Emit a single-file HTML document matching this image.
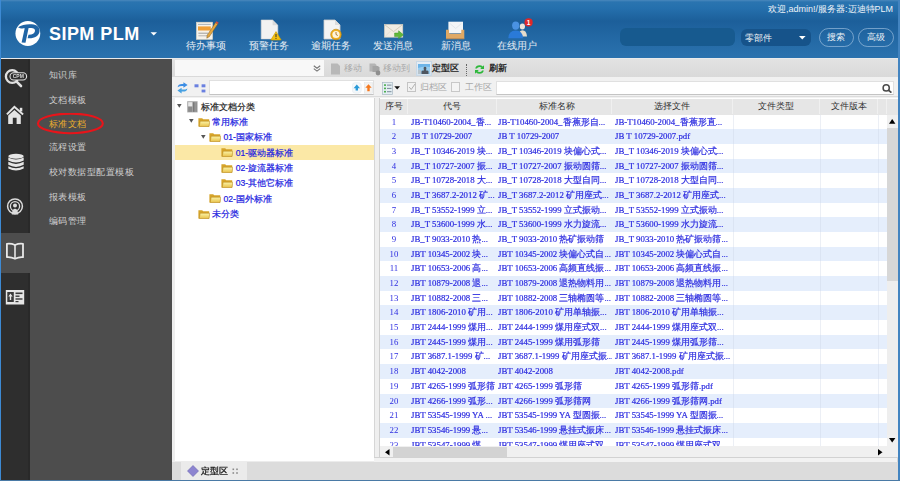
<!DOCTYPE html>
<html><head><meta charset="utf-8">
<style>
*{margin:0;padding:0;box-sizing:border-box}
html,body{width:900px;height:481px;overflow:hidden;background:#dcdcdc;font-family:"Liberation Sans",sans-serif}
.a{position:absolute}
#hdr{left:0;top:0;width:900px;height:58px;background:linear-gradient(to bottom,#4a88bd 0,#2a74b0 2px,#2570ad 8px,#1c5f9a 21px,#2267a3 36px,#2a71ad 56px)}
#hdrline{left:0;top:57.6px;width:900px;height:1.4px;background:#e9eaeb}
.tb{color:#e6edf4;font-size:9.5px;white-space:nowrap;text-align:center}
#strip{left:1.3px;top:59px;width:28.7px;height:421px;background:#2e2e2e}
#menu{left:30px;top:59px;width:142px;height:421px;background:#4d4d4d}
.mi{left:48.6px;color:#cfcfcf;font-size:9.3px;letter-spacing:0.5px;white-space:nowrap;line-height:12px}
#content{left:172px;top:59px;width:725.5px;height:421px;background:#d6d6d6}
.row{position:absolute;left:380px;width:507px;height:14.68px;font-family:"Liberation Serif",serif;font-size:8.8px;color:#2c2ce0;line-height:14.68px;white-space:nowrap}
.row.o{background:#e5eefc}
.row span{-webkit-text-stroke:0.2px currentColor}
.row span.c0{-webkit-text-stroke:0}
.row.e{background:#fff}
.row span{position:absolute;top:0;overflow:hidden}
.row i.g{position:absolute;top:0;width:1px;height:100%;background:rgba(200,210,225,0.35)}
.c0{left:0;width:28px;text-align:center}
.c1{left:31px;width:86px}
.c2{left:118px;width:114px}
.c3{left:235px;width:118px}
.hd{position:absolute;top:0;height:15.6px;line-height:15.6px;font-size:9px;color:#333;text-align:center;border-right:1px solid #f0f0f0}
.tn{position:absolute;height:15.3px;line-height:15.3px;font-size:8.6px;white-space:nowrap;color:#2020e0;-webkit-text-stroke:0.2px currentColor}
</style></head><body><div id="wrap" style="position:absolute;left:0;top:0;width:900px;height:481px;filter:blur(0.3px)">
<!-- header -->
<div id="hdr" class="a"></div>
<div id="hdrline" class="a"></div>
<!-- logo -->
<svg class="a" style="left:12px;top:18px" width="32" height="32" viewBox="0 0 32 32">
<circle cx="15.85" cy="15.5" r="12.4" fill="#fff"/>
<path d="M6 9.2 C10 6.6 16.5 5.6 21.8 6.6 C26.2 7.5 27.9 10.2 27.5 13.4 C27 17.6 23 20 17.2 20.3 L15.6 20.3 L16.5 16.7 C20.4 16.8 22.7 15.2 23 12.9 C23.3 10.8 21.6 9.9 19.2 9.9 L16.6 9.9 L13.5 24.8 L9.6 24.6 L12.7 10.3 C10.2 10.5 7.9 10.6 6 9.2Z" fill="#1f64a5"/>
</svg>
<div class="a" style="left:49px;top:23.5px;color:#fff;font-weight:bold;font-size:18px;letter-spacing:0.45px;line-height:20px;white-space:nowrap">SIPM PLM</div>
<svg class="a" style="left:150px;top:32px" width="8" height="4"><path d="M0.5 0.3 L7 0.3 L3.75 3.6Z" fill="#fff"/></svg>

<!-- header toolbar items -->
<div class="a tb" style="left:181px;top:40px;width:50px">待办事项</div>
<div class="a tb" style="left:244px;top:40px;width:50px">预警任务</div>
<div class="a tb" style="left:306px;top:40px;width:50px">逾期任务</div>
<div class="a tb" style="left:368px;top:40px;width:50px">发送消息</div>
<div class="a tb" style="left:431px;top:40px;width:50px">新消息</div>
<div class="a tb" style="left:492px;top:40px;width:50px">在线用户</div>

<!-- icon: todo -->
<svg class="a" style="left:195px;top:20px" width="24" height="20" viewBox="0 0 24 20">
<rect x="1.4" y="2.2" width="16.2" height="17.2" fill="#f6f2ea" stroke="#ddd4c2" stroke-width="0.6"/>
<line x1="3" y1="4.4" x2="15.8" y2="4.4" stroke="#8a98a6" stroke-width="0.7"/>
<rect x="3" y="6.4" width="12.8" height="4.1" fill="#f0a038"/>
<line x1="3.4" y1="13.2" x2="13" y2="13.2" stroke="#7a7a7a" stroke-width="0.7"/>
<line x1="3.4" y1="15.8" x2="12" y2="15.8" stroke="#9a9a9a" stroke-width="0.7"/>
<path d="M11.8 18.2 L12.2 15.2 L20.6 2.6 L22.8 4 L14.4 16.6Z" fill="#e6a840" stroke="#7a5a20" stroke-width="0.5"/>
<path d="M20.6 2.6 L21.5 1.3 L23.7 2.7 L22.8 4Z" fill="#e04a3a"/>
</svg>
<!-- icon: warning task -->
<svg class="a" style="left:259px;top:19px" width="24" height="22" viewBox="0 0 24 22">
<path d="M2.2 1 L13.6 1 L18.8 6.2 L18.8 19.9 L2.2 19.9Z" fill="#f2f2f2" stroke="#d8d8d8" stroke-width="0.6"/>
<path d="M13.6 1 L13.6 6.2 L18.8 6.2Z" fill="#dadada"/>
<path d="M17 12.6 L22.2 21 L11.8 21Z" fill="#f4c010" stroke="#c89a00" stroke-width="0.6"/>
<rect x="16.5" y="15" width="1" height="3.2" fill="#333"/><rect x="16.5" y="19" width="1" height="0.9" fill="#333"/>
</svg>
<!-- icon: overdue -->
<svg class="a" style="left:321px;top:19px" width="24" height="22" viewBox="0 0 24 22">
<path d="M3 1 L14 1 L19 6 L19 20 L3 20Z" fill="#f4f4f4" stroke="#cfcfcf" stroke-width="0.8"/>
<path d="M14 1 L14 6 L19 6" fill="#ddd"/>
<circle cx="15" cy="15.5" r="5.3" fill="#f0b020" stroke="#c08000" stroke-width="0.6"/>
<circle cx="15" cy="15.5" r="3.6" fill="#fff4dc"/>
<path d="M15 13 L15 15.5 L16.8 16.5" stroke="#a06000" stroke-width="0.8" fill="none"/>
</svg>
<!-- icon: send msg -->
<svg class="a" style="left:383px;top:21px" width="24" height="20" viewBox="0 0 24 20">
<rect x="1.4" y="3.4" width="18.4" height="12.8" fill="#f1ece2" stroke="#d6cfc0" stroke-width="0.6"/>
<path d="M1.6 3.6 L10.6 10.6 L19.6 3.6" fill="none" stroke="#c9c0ae" stroke-width="0.7"/>
<path d="M1.6 16 L8 9.6 M19.6 16 L13.2 9.6" fill="none" stroke="#ddd6c8" stroke-width="0.5"/>
<path d="M11.6 12 L15.6 12 L15.6 9.8 L20.4 13.8 L15.6 17.8 L15.6 15.6 L11.6 15.6Z" fill="#62b83a" stroke="#3f9a28" stroke-width="0.5"/>
</svg>
<!-- icon: new msg -->
<svg class="a" style="left:445px;top:20px" width="22" height="20" viewBox="0 0 22 20">
<rect x="3.4" y="1.7" width="14.6" height="11.6" fill="#f3f5f7"/>
<path d="M5 3.5 L10.7 8.5 L16.4 3.5" fill="none" stroke="#dde2e8" stroke-width="0.8"/>
<path d="M1 9.7 L4 9.7 L4 12.6 Q4 13.8 5.4 13.8 L14.9 13.8 Q16.3 13.8 16.3 12.6 L16.3 9.7 L19.3 9.7 L19.3 18.8 L1 18.8Z" fill="#dfa864"/>
<path d="M1 18.8 L19.3 18.8" stroke="#c88a48" stroke-width="0.8"/>
</svg>
<!-- icon: online users -->
<svg class="a" style="left:506px;top:18px" width="28" height="22" viewBox="0 0 28 22">
<ellipse cx="16.4" cy="8.6" rx="2.6" ry="3" fill="#ece6dc"/>
<path d="M12.5 18.5 Q13 12.2 16.4 12.2 Q20.5 12.2 21 18.5Z" fill="#e6dccc"/>
<ellipse cx="9.7" cy="7.6" rx="3.6" ry="4.2" fill="#4a92e2"/>
<path d="M2.3 20.2 Q2.6 12.6 9.7 12.6 Q16.6 12.6 17 20.2Z" fill="#2a7ad8"/>
<circle cx="22.6" cy="4.4" r="4.1" fill="#e02828"/>
<text x="22.6" y="6.8" font-size="6.5" font-weight="bold" fill="#fff" text-anchor="middle" font-family="Liberation Sans">1</text>
</svg>

<!-- welcome -->
<div class="a" style="left:768px;top:3.5px;color:#eef3f8;font-size:9px;white-space:nowrap;line-height:11px">欢迎,admin!/服务器:迈迪特PLM</div>
<!-- search -->
<div class="a" style="left:620.3px;top:27.8px;width:114.7px;height:18.4px;border-radius:6px;background:#175a8f"></div>
<div class="a" style="left:740.5px;top:29px;width:70.5px;height:17px;border-radius:6px;background:#16538a"></div>
<div class="a" style="left:745px;top:31.8px;color:#eef2f6;font-size:9px;line-height:12px;letter-spacing:0.2px">零部件</div>
<svg class="a" style="left:799px;top:36px" width="7" height="4"><path d="M0 0 L6.6 0 L3.3 3.5Z" fill="#fff"/></svg>
<div class="a" style="left:818.5px;top:27.5px;width:35.8px;height:19.3px;border-radius:10px;border:1.3px solid rgba(200,222,244,0.5);color:#eef2f6;font-size:9px;text-align:center;line-height:17px">搜索</div>
<div class="a" style="left:857.6px;top:27.5px;width:36px;height:19.3px;border-radius:10px;border:1.3px solid rgba(200,222,244,0.5);color:#eef2f6;font-size:9px;text-align:center;line-height:17px">高级</div>

<!-- sidebar -->
<div id="strip" class="a"></div>
<div class="a" style="left:1.3px;top:232.5px;width:28.7px;height:40.2px;background:#4d4d4d"></div>
<div id="menu" class="a"></div>
<div class="a" style="left:27.6px;top:59px;width:2.4px;height:421px;background:#292929"></div>
<div class="a" style="left:27.6px;top:232.5px;width:2.4px;height:40.2px;background:#4d4d4d"></div>

<!-- sidebar icons -->
<svg class="a" style="left:4px;top:66px" width="24" height="22" viewBox="0 0 24 22">
<circle cx="8.2" cy="10.5" r="6.3" fill="none" stroke="#e0e0e0" stroke-width="2.3"/>
<path d="M12.6 15.6 L17 20" stroke="#e0e0e0" stroke-width="2.6" stroke-linecap="round"/>
<rect x="6" y="6.8" width="16.6" height="7.2" rx="3.6" fill="#2e2e2e" stroke="#e0e0e0" stroke-width="1.1"/>
<text x="14.3" y="12.2" font-size="5" font-weight="bold" fill="#d8d8d8" text-anchor="middle" font-family="Liberation Sans">CPM</text>
</svg>
<svg class="a" style="left:5px;top:105px" width="20" height="20" viewBox="0 0 20 20">
<path d="M1.9 9.4 L9.4 1.8 L18.1 9.4" fill="none" stroke="#e4e4e4" stroke-width="2"/>
<path d="M3.2 10.6 L9.4 5.1 L15.8 10.6 L15.8 18.9 L11.6 18.9 L11.6 12.7 L7.8 12.7 L7.8 18.9 L3.2 18.9Z" fill="#e4e4e4"/>
<rect x="14.8" y="2.8" width="2.5" height="3.6" fill="#e4e4e4"/>
</svg>
<svg class="a" style="left:6.5px;top:152.8px" width="18" height="19" viewBox="0 0 19 21">
<ellipse cx="9.5" cy="3.5" rx="8.5" ry="2.8" fill="#e6e6e6"/>
<path d="M1 5 Q9.5 9.6 18 5 L18 8.3 Q9.5 12.9 1 8.3Z" fill="#e6e6e6"/>
<path d="M1 9.8 Q9.5 14.4 18 9.8 L18 13.1 Q9.5 17.7 1 13.1Z" fill="#e6e6e6"/>
<path d="M1 14.6 Q9.5 19.2 18 14.6 L18 17 Q9.5 21.6 1 17Z" fill="#e6e6e6"/>
</svg>
<svg class="a" style="left:6px;top:197.8px" width="18" height="17" viewBox="0 0 18 17">
<circle cx="9" cy="8.3" r="7.4" fill="none" stroke="#dcdcdc" stroke-width="1.5"/>
<circle cx="9" cy="8.3" r="4.6" fill="none" stroke="#dcdcdc" stroke-width="1.3"/>
<circle cx="9" cy="7.6" r="2" fill="#dcdcdc"/>
<path d="M5.8 16.6 Q6.2 10.8 9 10.8 Q11.8 10.8 12.2 16.6Z" fill="#dcdcdc"/>
</svg>
<svg class="a" style="left:5px;top:242px" width="20" height="19" viewBox="0 0 20 19">
<path d="M1.9 1.8 Q6 1.2 10 3 Q14 1.2 18 1.8 L18 15.2 Q14 14.8 10 16.8 Q6 14.8 1.9 15.2Z" fill="none" stroke="#e8e8e8" stroke-width="1.8" stroke-linejoin="round"/>
<line x1="10" y1="3" x2="10" y2="16.2" stroke="#e8e8e8" stroke-width="1.6"/>
</svg>
<svg class="a" style="left:5px;top:288.7px" width="20" height="17" viewBox="0 0 20 17">
<rect x="0.8" y="1" width="18.4" height="14.5" fill="#e6e6e6"/>
<rect x="2.3" y="3" width="6.5" height="10" fill="#3a3a3a"/>
<path d="M5.5 4.5 L3.3 7.5 L4.8 7.5 L4.8 11 L6.2 11 L6.2 7.5 L7.7 7.5Z" fill="#e6e6e6"/>
<rect x="10.5" y="3.5" width="7" height="1.6" fill="#3a3a3a"/>
<rect x="10.5" y="6.5" width="4" height="1.4" fill="#3a3a3a"/>
<rect x="10.5" y="9.3" width="7" height="1.4" fill="#3a3a3a"/>
<rect x="10.5" y="12" width="3" height="1.2" fill="#3a3a3a"/>
</svg>

<!-- menu items -->
<div class="a mi" style="top:69px">知识库</div>
<div class="a mi" style="top:94px">文档模板</div>
<div class="a mi" style="top:118px;color:#ebb02c">标准文档</div>
<div class="a mi" style="top:141px">流程设置</div>
<div class="a mi" style="top:166px">校对数据型配置模板</div>
<div class="a mi" style="top:191px">报表模板</div>
<div class="a mi" style="top:215px">编码管理</div>
<svg class="a" style="left:36px;top:113px" width="70" height="23" viewBox="0 0 70 23">
<ellipse cx="34.4" cy="10.4" rx="32.4" ry="9.8" fill="none" stroke="#e8141a" stroke-width="2.1"/>
</svg>

<!-- content -->
<div id="content" class="a"></div>
<!-- toolbar row 1 -->
<div class="a" style="left:172px;top:59px;width:725.5px;height:17.5px;background:linear-gradient(#e2e2e2,#d9d9d9)"></div>
<div class="a" style="left:175px;top:59.5px;width:149px;height:16px;background:#f8f8f8"></div>
<svg class="a" style="left:313px;top:64.5px" width="8" height="7" viewBox="0 0 8 7"><path d="M0.8 0.8 L4 3.3 L7.2 0.8 M0.8 3.6 L4 6.1 L7.2 3.6" stroke="#777" stroke-width="1.2" fill="none"/></svg>

<!-- toolbar row 2 -->
<div class="a" style="left:172px;top:76.5px;width:725.5px;height:21px;background:#f1f1f1"></div>
<div class="a" style="left:172px;top:96.3px;width:725.5px;height:1.2px;background:#dcdcdc"></div>
<!-- tree panel toolbar row 2 -->
<svg class="a" style="left:177px;top:82px" width="11" height="12" viewBox="0 0 11 12">
<path d="M0.6 5.2 Q1.2 2 5 2 L6.4 2 L6.4 0.2 L10.6 3 L6.4 5.8 L6.4 4 L5 4 Q2.4 4 0.6 5.2Z" fill="#3b8de4"/>
<path d="M10.4 6.4 Q9.8 9.6 6 9.6 L4.6 9.6 L4.6 11.4 L0.4 8.6 L4.6 5.8 L4.6 7.6 L6 7.6 Q8.6 7.6 10.4 6.4Z" fill="#46a0e2"/>
</svg>
<svg class="a" style="left:193.5px;top:83.5px" width="12" height="9" viewBox="0 0 12 9">
<rect x="0.5" y="0.3" width="4" height="3" fill="#6a80e0"/><rect x="7.6" y="0.3" width="3.8" height="3" fill="#6a80e0"/>
<rect x="7.6" y="5.6" width="3.8" height="2.8" fill="#6a80e0"/>
</svg>
<div class="a" style="left:209.2px;top:80px;width:165px;height:14.8px;background:#fff;border:1px solid #e0e0e0;border-bottom-color:#c4c4c4"></div>
<svg class="a" style="left:351.5px;top:82px" width="22" height="12" viewBox="0 0 22 12">
<rect x="0.3" y="0.6" width="9" height="10.6" rx="3" fill="#f3f7fa" stroke="#e2e8ee" stroke-width="0.5"/>
<path d="M4.8 2.4 L8 6.2 L6 6.2 L6 8.6 L3.6 8.6 L3.6 6.2 L1.6 6.2Z" fill="#2a9ad8"/>
<rect x="12.3" y="0.6" width="8.4" height="10.6" fill="#f4f2f0" stroke="#dde3ea" stroke-width="0.5"/>
<path d="M16.5 2.2 L19.7 5.8 L17.7 5.8 L17.7 9.2 L15.3 9.2 L15.3 5.8 L13.3 5.8Z" fill="#f5781e"/>
</svg>

<!-- grid toolbar row 1 -->
<svg class="a" style="left:330px;top:63px" width="11" height="12" viewBox="0 0 11 12"><path d="M1 0.5 L7.5 0.5 L10 3 L10 11.5 L1 11.5Z" fill="#b8b8b8"/></svg>
<div class="a" style="left:344px;top:63px;font-size:8.8px;color:#a8a8a8;line-height:11px">移动</div>
<svg class="a" style="left:368.5px;top:62.5px" width="13" height="13" viewBox="0 0 13 13"><path d="M0.5 0.5 L6 0.5 L7.5 2 L7.5 8.5 L0.5 8.5Z" fill="#b4b4b4"/><path d="M3.5 3 L9 3 L10.5 4.5 L10.5 9 L3.5 9Z" fill="#a4a4a4"/><circle cx="9" cy="10" r="2.4" fill="#8e8e8e"/></svg>
<div class="a" style="left:383px;top:63px;font-size:8.8px;color:#a8a8a8;line-height:11px">移动到</div>
<div class="a" style="left:415.5px;top:60.5px;width:16px;height:15.5px;background:linear-gradient(#e6eef6,#d4e2ee);border:1px solid #c8d8e6"></div>
<svg class="a" style="left:418px;top:63.5px" width="12" height="10" viewBox="0 0 12 10"><rect x="0" y="0" width="12" height="10" fill="#98cdf0"/><path d="M0 0 L12 0 L12 3 Q6 1.5 0 4Z" fill="#6cb4e8"/><path d="M3.5 10 L3.5 7.6 Q3.5 6.4 5 6.4 L6 6.4 L5.6 4.2 Q5.6 2.8 7 2.8 Q8.4 2.8 8.4 4.2 L8 6.4 L9 6.4 Q10.5 6.4 10.5 7.6 L10.5 10Z" fill="#4e5660"/><rect x="0" y="6" width="3" height="4" fill="#b8c4cc"/></svg>
<div class="a" style="left:432px;top:62.5px;font-size:9px;color:#1a1a1a;line-height:11px;-webkit-text-stroke:0.3px #1a1a1a">定型区</div>
<div class="a" style="left:465.5px;top:64px;width:1px;height:12px;border-left:1px dotted #666"></div>
<svg class="a" style="left:473.5px;top:63.5px" width="11" height="11" viewBox="0 0 11 11">
<path d="M1.2 4.6 Q2 1.3 5.5 1.3 Q7.6 1.3 8.7 2.6 L10 1.2 L10 5 L6.2 5 L7.5 3.7 Q6.8 3 5.5 3 Q3.5 3 2.9 4.6Z" fill="#2db83a"/>
<path d="M9.8 6.4 Q9 9.7 5.5 9.7 Q3.4 9.7 2.3 8.4 L1 9.8 L1 6 L4.8 6 L3.5 7.3 Q4.2 8 5.5 8 Q7.5 8 8.1 6.4Z" fill="#2db83a"/>
</svg>
<div class="a" style="left:488.5px;top:62.5px;font-size:9px;color:#1a1a1a;line-height:11px;-webkit-text-stroke:0.3px #1a1a1a">刷新</div>

<!-- grid toolbar row 2 -->
<svg class="a" style="left:381.5px;top:81.5px" width="18" height="13" viewBox="0 0 18 13">
<rect x="0.5" y="0.5" width="10" height="12" fill="#e4eef2" stroke="#a8b8c4" stroke-width="0.7"/>
<rect x="2" y="2.3" width="2" height="1.6" fill="#4caf50"/><rect x="2" y="5.6" width="2" height="1.6" fill="#4caf50"/><rect x="2" y="8.9" width="2" height="1.6" fill="#4caf50"/>
<rect x="5" y="2.6" width="4.5" height="1" fill="#7a8a9a"/><rect x="5" y="5.9" width="4.5" height="1" fill="#7a8a9a"/><rect x="5" y="9.2" width="4.5" height="1" fill="#7a8a9a"/>
<path d="M12.3 4.2 L18.1 4.2 L15.2 7.5Z" fill="#111"/>
</svg>
<div class="a" style="left:406.7px;top:82.3px;width:9.5px;height:10px;border:1px solid #c4c4c4;background:#f2f2f2"></div>
<svg class="a" style="left:407.5px;top:83px" width="8" height="8"><path d="M1.2 4 L3.2 6.5 L7 1" stroke="#b0b0b0" stroke-width="1" fill="none"/></svg>
<div class="a" style="left:420px;top:82px;font-size:8.8px;color:#a8a8a8;line-height:11px">归档区</div>
<div class="a" style="left:450.7px;top:82.3px;width:9.5px;height:10px;border:1px solid #c8c8c8;background:#f4f4f4"></div>
<div class="a" style="left:464.7px;top:82px;font-size:8.8px;color:#a8a8a8;line-height:11px">工作区</div>
<div class="a" style="left:496px;top:80.5px;width:397.5px;height:14.5px;background:#fff;border:1px solid #e0e0e0;border-bottom-color:#c4c4c4"></div>
<svg class="a" style="left:881.5px;top:83.5px" width="11" height="9" viewBox="0 0 11 9"><circle cx="4.2" cy="3.9" r="3.1" fill="none" stroke="#4a4a4a" stroke-width="1.5"/><path d="M6.4 6.1 L9.4 8.6" stroke="#4a4a4a" stroke-width="1.8"/></svg>

<!-- tree body -->
<div class="a" style="left:172px;top:97.5px;width:3px;height:364px;background:#eeeeee"></div>
<div class="a" style="left:174.5px;top:97.5px;width:200px;height:363.1px;background:#fff"></div>
<div class="a" style="left:175px;top:145px;width:199.4px;height:15.4px;background:#fbe8a6"></div>
<!-- tree nodes -->
<svg width="0" height="0" style="position:absolute"><defs><linearGradient id="fg" x1="0" y1="0" x2="0" y2="1"><stop offset="0" stop-color="#fbf4a8"/><stop offset="1" stop-color="#e8c048"/></linearGradient></defs></svg>
<svg class="a" style="left:177.3px;top:103.8px" width="5" height="4"><path d="M0 0 L4.6 0 L2.3 3.8Z" fill="#555"/></svg>
<svg class="a" style="left:186.5px;top:101.2px" width="11" height="12" viewBox="0 0 11 12">
<rect x="0.2" y="0.2" width="10.4" height="11.2" fill="#a8a8a8"/>
<rect x="1.2" y="1.2" width="4" height="4" fill="#e8e8e8"/>
<rect x="6" y="1.2" width="1.6" height="9.6" fill="#777"/>
<rect x="8.4" y="1.2" width="1.4" height="9.6" fill="#8a8a8a"/>
<rect x="1.2" y="6" width="4" height="4.8" fill="#8c8c8c"/>
</svg>
<div class="tn" style="left:201px;top:99.8px;color:#222">标准文档分类</div>

<svg class="a" style="left:189px;top:119.3px" width="5" height="4"><path d="M0 0 L4.6 0 L2.3 3.8Z" fill="#555"/></svg>
<svg class="a f" style="left:197.5px;top:116.8px" width="12" height="10" viewBox="0 0 12 10"><path d="M0.4 1.2 L4.2 1.2 L5.2 2.3 L11.2 2.3 L11.2 9.6 L0.4 9.6Z" fill="#d6a42a"/><path d="M2.2 4.2 L11.8 4.2 L11 9.6 L1.2 9.6Z" fill="url(#fg)" stroke="#b4861e" stroke-width="0.5"/></svg>
<div class="tn" style="left:212px;top:115.1px">常用标准</div>

<svg class="a" style="left:200.7px;top:134.6px" width="5" height="4"><path d="M0 0 L4.6 0 L2.3 3.8Z" fill="#555"/></svg>
<svg class="a" style="left:209.2px;top:132.1px" width="12" height="10" viewBox="0 0 12 10"><path d="M0.4 1.2 L4.2 1.2 L5.2 2.3 L11.2 2.3 L11.2 9.6 L0.4 9.6Z" fill="#d6a42a"/><path d="M2.2 4.2 L11.8 4.2 L11 9.6 L1.2 9.6Z" fill="url(#fg)" stroke="#b4861e" stroke-width="0.5"/></svg>
<div class="tn" style="left:223.5px;top:130.4px">01-国家标准</div>

<svg class="a" style="left:220.9px;top:147.4px" width="12" height="10" viewBox="0 0 12 10"><path d="M0.4 1.2 L4.2 1.2 L5.2 2.3 L11.2 2.3 L11.2 9.6 L0.4 9.6Z" fill="#d6a42a"/><path d="M2.2 4.2 L11.8 4.2 L11 9.6 L1.2 9.6Z" fill="url(#fg)" stroke="#b4861e" stroke-width="0.5"/></svg>
<div class="tn" style="left:235.8px;top:145.7px">01-驱动器标准</div>

<svg class="a" style="left:220.9px;top:162.7px" width="12" height="10" viewBox="0 0 12 10"><path d="M0.4 1.2 L4.2 1.2 L5.2 2.3 L11.2 2.3 L11.2 9.6 L0.4 9.6Z" fill="#d6a42a"/><path d="M2.2 4.2 L11.8 4.2 L11 9.6 L1.2 9.6Z" fill="url(#fg)" stroke="#b4861e" stroke-width="0.5"/></svg>
<div class="tn" style="left:235.8px;top:161px">02-旋流器标准</div>

<svg class="a" style="left:220.9px;top:178px" width="12" height="10" viewBox="0 0 12 10"><path d="M0.4 1.2 L4.2 1.2 L5.2 2.3 L11.2 2.3 L11.2 9.6 L0.4 9.6Z" fill="#d6a42a"/><path d="M2.2 4.2 L11.8 4.2 L11 9.6 L1.2 9.6Z" fill="url(#fg)" stroke="#b4861e" stroke-width="0.5"/></svg>
<div class="tn" style="left:235.8px;top:176.3px">03-其他它标准</div>

<svg class="a" style="left:209.2px;top:193.3px" width="12" height="10" viewBox="0 0 12 10"><path d="M0.4 1.2 L4.2 1.2 L5.2 2.3 L11.2 2.3 L11.2 9.6 L0.4 9.6Z" fill="#d6a42a"/><path d="M2.2 4.2 L11.8 4.2 L11 9.6 L1.2 9.6Z" fill="url(#fg)" stroke="#b4861e" stroke-width="0.5"/></svg>
<div class="tn" style="left:223.5px;top:191.6px">02-国外标准</div>

<svg class="a" style="left:197.5px;top:208.6px" width="12" height="10" viewBox="0 0 12 10"><path d="M0.4 1.2 L4.2 1.2 L5.2 2.3 L11.2 2.3 L11.2 9.6 L0.4 9.6Z" fill="#d6a42a"/><path d="M2.2 4.2 L11.8 4.2 L11 9.6 L1.2 9.6Z" fill="url(#fg)" stroke="#b4861e" stroke-width="0.5"/></svg>
<div class="tn" style="left:212px;top:206.9px">未分类</div>

<!-- splitter -->
<div class="a" style="left:374.4px;top:97.5px;width:5.6px;height:363.1px;background:#efefef;border-left:1px solid #d6d6d6;border-right:1px solid #d0d0d0"></div>

<!-- grid -->
<div class="a" style="left:380px;top:98.3px;width:517.5px;height:348px;background:#fff"></div>
<div class="a" style="left:380px;top:98.8px;width:507px;height:15.8px;background:#e6e6e6"></div>
<div class="hd" style="left:380px;width:28.0px;top:98.8px">序号</div>
<div class="hd" style="left:408px;width:89.0px;top:98.8px">代号</div>
<div class="hd" style="left:497px;width:115.4px;top:98.8px;padding-left:5px">标准名称</div>
<div class="hd" style="left:612.4px;width:120.6px;top:98.8px">选择文件</div>
<div class="hd" style="left:733px;width:87.0px;top:98.8px">文件类型</div>
<div class="hd" style="left:820px;width:58.0px;top:98.8px">文件版本</div>
<div class="hd" style="left:878px;width:9.0px;top:98.8px"></div>

<!-- rows clip -->
<div class="a" style="left:0;top:0;width:900px;height:481px;overflow:hidden;pointer-events:none">
<div class="a" style="left:0;top:0;width:900px;height:446px;overflow:hidden">
<div class="row e" style="top:114.60px"><span class="c0">1</span><span class="c1">JB-T10460-2004_香...</span><span class="c2">JB-T10460-2004_香蕉形自...</span><span class="c3">JB-T10460-2004_香蕉形直...</span><i class="g" style="left:353px"></i><i class="g" style="left:440px"></i><i class="g" style="left:498px"></i></div>
<div class="row o" style="top:129.28px"><span class="c0">2</span><span class="c1">JB T 10729-2007</span><span class="c2">JB T 10729-2007</span><span class="c3">JB T 10729-2007.pdf</span><i class="g" style="left:353px"></i><i class="g" style="left:440px"></i><i class="g" style="left:498px"></i></div>
<div class="row e" style="top:143.96px"><span class="c0">3</span><span class="c1">JB_T 10346-2019 块...</span><span class="c2">JB_T 10346-2019 块偏心式...</span><span class="c3">JB_T 10346-2019 块偏心式...</span><i class="g" style="left:353px"></i><i class="g" style="left:440px"></i><i class="g" style="left:498px"></i></div>
<div class="row o" style="top:158.64px"><span class="c0">4</span><span class="c1">JB_T 10727-2007 振...</span><span class="c2">JB_T 10727-2007 振动圆筛...</span><span class="c3">JB_T 10727-2007 振动圆筛...</span><i class="g" style="left:353px"></i><i class="g" style="left:440px"></i><i class="g" style="left:498px"></i></div>
<div class="row e" style="top:173.32px"><span class="c0">5</span><span class="c1">JB_T 10728-2018 大...</span><span class="c2">JB_T 10728-2018 大型自同...</span><span class="c3">JB_T 10728-2018 大型自同...</span><i class="g" style="left:353px"></i><i class="g" style="left:440px"></i><i class="g" style="left:498px"></i></div>
<div class="row o" style="top:188.00px"><span class="c0">6</span><span class="c1">JB_T 3687.2-2012 矿...</span><span class="c2">JB_T 3687.2-2012 矿用座式...</span><span class="c3">JB_T 3687.2-2012 矿用座式...</span><i class="g" style="left:353px"></i><i class="g" style="left:440px"></i><i class="g" style="left:498px"></i></div>
<div class="row e" style="top:202.68px"><span class="c0">7</span><span class="c1">JB_T 53552-1999 立...</span><span class="c2">JB_T 53552-1999 立式振动...</span><span class="c3">JB_T 53552-1999 立式振动...</span><i class="g" style="left:353px"></i><i class="g" style="left:440px"></i><i class="g" style="left:498px"></i></div>
<div class="row o" style="top:217.36px"><span class="c0">8</span><span class="c1">JB_T 53600-1999 水...</span><span class="c2">JB_T 53600-1999 水力旋流...</span><span class="c3">JB_T 53600-1999 水力旋流...</span><i class="g" style="left:353px"></i><i class="g" style="left:440px"></i><i class="g" style="left:498px"></i></div>
<div class="row e" style="top:232.04px"><span class="c0">9</span><span class="c1">JB_T 9033-2010 热...</span><span class="c2">JB_T 9033-2010 热矿振动筛</span><span class="c3">JB_T 9033-2010 热矿振动筛...</span><i class="g" style="left:353px"></i><i class="g" style="left:440px"></i><i class="g" style="left:498px"></i></div>
<div class="row o" style="top:246.72px"><span class="c0">10</span><span class="c1">JBT 10345-2002 块...</span><span class="c2">JBT 10345-2002 块偏心式自...</span><span class="c3">JBT 10345-2002 块偏心式自...</span><i class="g" style="left:353px"></i><i class="g" style="left:440px"></i><i class="g" style="left:498px"></i></div>
<div class="row e" style="top:261.40px"><span class="c0">11</span><span class="c1">JBT 10653-2006 高...</span><span class="c2">JBT 10653-2006 高频直线振...</span><span class="c3">JBT 10653-2006 高频直线振...</span><i class="g" style="left:353px"></i><i class="g" style="left:440px"></i><i class="g" style="left:498px"></i></div>
<div class="row o" style="top:276.08px"><span class="c0">12</span><span class="c1">JBT 10879-2008 退...</span><span class="c2">JBT 10879-2008 退热物料用...</span><span class="c3">JBT 10879-2008 退热物料用...</span><i class="g" style="left:353px"></i><i class="g" style="left:440px"></i><i class="g" style="left:498px"></i></div>
<div class="row e" style="top:290.76px"><span class="c0">13</span><span class="c1">JBT 10882-2008 三...</span><span class="c2">JBT 10882-2008 三轴椭圆等...</span><span class="c3">JBT 10882-2008 三轴椭圆等...</span><i class="g" style="left:353px"></i><i class="g" style="left:440px"></i><i class="g" style="left:498px"></i></div>
<div class="row o" style="top:305.44px"><span class="c0">14</span><span class="c1">JBT 1806-2010 矿用...</span><span class="c2">JBT 1806-2010 矿用单轴振...</span><span class="c3">JBT 1806-2010 矿用单轴振...</span><i class="g" style="left:353px"></i><i class="g" style="left:440px"></i><i class="g" style="left:498px"></i></div>
<div class="row e" style="top:320.12px"><span class="c0">15</span><span class="c1">JBT 2444-1999 煤用...</span><span class="c2">JBT 2444-1999 煤用座式双...</span><span class="c3">JBT 2444-1999 煤用座式双...</span><i class="g" style="left:353px"></i><i class="g" style="left:440px"></i><i class="g" style="left:498px"></i></div>
<div class="row o" style="top:334.80px"><span class="c0">16</span><span class="c1">JBT 2445-1999 煤用...</span><span class="c2">JBT 2445-1999 煤用弧形筛</span><span class="c3">JBT 2445-1999 煤用弧形筛...</span><i class="g" style="left:353px"></i><i class="g" style="left:440px"></i><i class="g" style="left:498px"></i></div>
<div class="row e" style="top:349.48px"><span class="c0">17</span><span class="c1">JBT 3687.1-1999 矿...</span><span class="c2">JBT 3687.1-1999 矿用座式振...</span><span class="c3">JBT 3687.1-1999 矿用座式振...</span><i class="g" style="left:353px"></i><i class="g" style="left:440px"></i><i class="g" style="left:498px"></i></div>
<div class="row o" style="top:364.16px"><span class="c0">18</span><span class="c1">JBT 4042-2008</span><span class="c2">JBT 4042-2008</span><span class="c3">JBT 4042-2008.pdf</span><i class="g" style="left:353px"></i><i class="g" style="left:440px"></i><i class="g" style="left:498px"></i></div>
<div class="row e" style="top:378.84px"><span class="c0">19</span><span class="c1">JBT 4265-1999 弧形筛</span><span class="c2">JBT 4265-1999 弧形筛</span><span class="c3">JBT 4265-1999 弧形筛.pdf</span><i class="g" style="left:353px"></i><i class="g" style="left:440px"></i><i class="g" style="left:498px"></i></div>
<div class="row o" style="top:393.52px"><span class="c0">20</span><span class="c1">JBT 4266-1999 弧形...</span><span class="c2">JBT 4266-1999 弧形筛网</span><span class="c3">JBT 4266-1999 弧形筛网.pdf</span><i class="g" style="left:353px"></i><i class="g" style="left:440px"></i><i class="g" style="left:498px"></i></div>
<div class="row e" style="top:408.20px"><span class="c0">21</span><span class="c1">JBT 53545-1999 YA ...</span><span class="c2">JBT 53545-1999 YA 型圆振...</span><span class="c3">JBT 53545-1999 YA 型圆振...</span><i class="g" style="left:353px"></i><i class="g" style="left:440px"></i><i class="g" style="left:498px"></i></div>
<div class="row o" style="top:422.88px"><span class="c0">22</span><span class="c1">JBT 53546-1999 悬...</span><span class="c2">JBT 53546-1999 悬挂式振床...</span><span class="c3">JBT 53546-1999 悬挂式振床...</span><i class="g" style="left:353px"></i><i class="g" style="left:440px"></i><i class="g" style="left:498px"></i></div>
<div class="row e" style="top:437.56px"><span class="c0">23</span><span class="c1">JBT 53547-1999 煤...</span><span class="c2">JBT 53547-1999 煤用座式双</span><span class="c3">JBT 53547-1999 煤用座式双</span><i class="g" style="left:353px"></i><i class="g" style="left:440px"></i><i class="g" style="left:498px"></i></div>
</div></div>
<!-- v scrollbar -->
<div class="a" style="left:887px;top:98.8px;width:10.5px;height:15.8px;background:#e6e6e6"></div>
<div class="a" style="left:887px;top:114.6px;width:10.5px;height:13.1px;background:#f0f0f0"></div>
<svg class="a" style="left:889px;top:119px" width="7" height="5"><path d="M0 4.8 L6.4 4.8 L3.2 0Z" fill="#000"/></svg>
<div class="a" style="left:887px;top:127.7px;width:10.5px;height:152.9px;background:#d7d7d7"></div>
<div class="a" style="left:887px;top:280.6px;width:10.5px;height:154.8px;background:#eeeeee"></div>
<div class="a" style="left:887px;top:435.4px;width:10.5px;height:22px;background:#f0f0f0"></div>
<svg class="a" style="left:889px;top:437.8px" width="7" height="5"><path d="M0 0 L6.4 0 L3.2 4.5Z" fill="#000"/></svg>
<!-- h scrollbar -->
<div class="a" style="left:380px;top:446px;width:507px;height:11.3px;background:#f0f0f0"></div>
<div class="a" style="left:392.5px;top:447px;width:114.2px;height:10px;background:#d3d3d3"></div>
<svg class="a" style="left:384.5px;top:448.6px" width="5" height="7"><path d="M4.5 0 L4.5 6.4 L0 3.2Z" fill="#000"/></svg>
<svg class="a" style="left:878px;top:448.5px" width="5" height="7"><path d="M0 0 L0 6.4 L4.5 3.2Z" fill="#000"/></svg>
<!-- bottom -->
<div class="a" style="left:374.4px;top:456.6px;width:523px;height:6px;background:#f2f2f2;border-top:1px solid #d2d2d2"></div>
<div class="a" style="left:175px;top:460.6px;width:199.4px;height:1.4px;background:#ececec"></div>
<div class="a" style="left:172px;top:462.4px;width:725.5px;height:17.2px;background:#dcdcdc"></div>
<div class="a" style="left:180.6px;top:462.4px;width:66.6px;height:17.2px;background:#ebebeb"></div>
<svg class="a" style="left:186.5px;top:465px" width="12" height="12" viewBox="0 0 12 12"><path d="M6 0.5 L11.5 6 L6 11.5 L0.5 6Z" fill="#8c84d0" stroke="#6a62b0" stroke-width="0.6"/></svg>
<div class="a" style="left:201px;top:466.3px;font-size:9px;color:#222;line-height:11px;-webkit-text-stroke:0.3px #222">定型区</div>
<svg class="a" style="left:231.5px;top:468px" width="7" height="7" viewBox="0 0 7 7"><rect x="0.5" y="0.5" width="1.6" height="1.6" fill="#8a8a8a"/><rect x="4.2" y="0.5" width="1.6" height="1.6" fill="#8a8a8a"/><rect x="0.5" y="4.2" width="1.6" height="1.6" fill="#8a8a8a"/><rect x="4.2" y="4.2" width="1.6" height="1.6" fill="#8a8a8a"/></svg>
<!-- frame -->
<div class="a" style="left:0;top:0;width:1.3px;height:481px;background:#3d8ad4"></div>
<div class="a" style="left:897.5px;top:0;width:2.5px;height:481px;background:#4384c0"></div>
<div class="a" style="left:0;top:479.5px;width:900px;height:1.5px;background:#4a7aa6"></div>
</div></body></html>
